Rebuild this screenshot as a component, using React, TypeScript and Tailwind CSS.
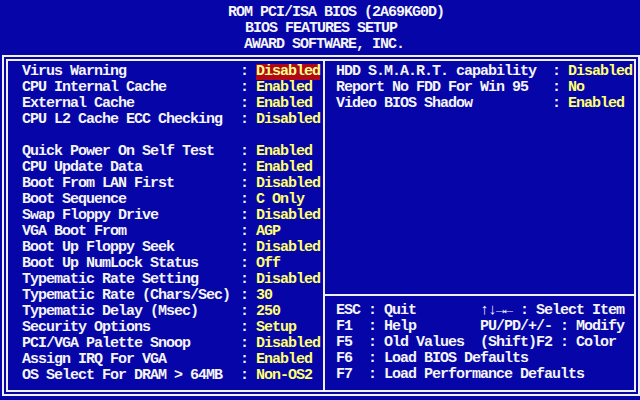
import React from "react"

const left: ([string, string] | null)[] = [
  ["Virus Warning", "Disabled"],
  ["CPU Internal Cache", "Enabled"],
  ["External Cache", "Enabled"],
  ["CPU L2 Cache ECC Checking", "Disabled"],
  null,
  ["Quick Power On Self Test", "Enabled"],
  ["CPU Update Data", "Enabled"],
  ["Boot From LAN First", "Disabled"],
  ["Boot Sequence", "C Only"],
  ["Swap Floppy Drive", "Disabled"],
  ["VGA Boot From", "AGP"],
  ["Boot Up Floppy Seek", "Disabled"],
  ["Boot Up NumLock Status", "Off"],
  ["Typematic Rate Setting", "Disabled"],
  ["Typematic Rate (Chars/Sec)", "30"],
  ["Typematic Delay (Msec)", "250"],
  ["Security Options", "Setup"],
  ["PCI/VGA Palette Snoop", "Disabled"],
  ["Assign IRQ For VGA", "Enabled"],
  ["OS Select For DRAM > 64MB", "Non-OS2"],
]

const right: [string, string][] = [
  ["HDD S.M.A.R.T. capability", "Disabled"],
  ["Report No FDD For Win 95", "No"],
  ["Video BIOS Shadow", "Enabled"],
]

const keys: [string, string, string, string][] = [
  ["ESC", "Quit", "↑↓→←", "Select Item"],
  ["F1", "Help", "PU/PD/+/-", "Modify"],
  ["F5", "Old Values", "(Shift)F2", "Color"],
  ["F6", "Load BIOS Defaults", "", ""],
  ["F7", "Load Performance Defaults", "", ""],
]

function Item({ label, value, labelW, selected }: { label: string; value: string; labelW: string; selected?: boolean }) {
  return (
    <div className="flex h-[16px] leading-[16px] whitespace-pre">
      <span className={`${labelW} shrink-0 text-[#f4f4f4]`}>{label}</span>
      <span className="text-[#f4f4f4]">: </span>
      <span className={selected ? "bg-[#b00818] text-[#ffff88]" : "text-[#ffff70]"}>{value}</span>
    </div>
  )
}

export default function App() {
  return (
    <div className="w-[640px] h-[400px] overflow-hidden bg-[#0606a8] font-['Liberation_Mono',monospace] text-[15px] font-bold tracking-[-1px] text-[#f4f4f4]">
      {/* title lines */}
      <div className="pt-[5px] whitespace-pre">
        <div className="h-[16px] leading-[16px] pl-[228px]">ROM PCI/ISA BIOS (2A69KG0D)</div>
        <div className="h-[16px] leading-[16px] pl-[245px]">BIOS FEATURES SETUP</div>
        <div className="h-[16px] leading-[16px] pl-[244px]">AWARD SOFTWARE, INC.</div>
      </div>

      {/* double frame */}
      <div className="mt-[2px] ml-[2px] w-[638px] h-[341px] border-2 border-[#f0f0f0] p-[2px]">
        <div className="h-full border-2 border-[#f0f0f0] flex">
          <div className="w-[317px] shrink-0 border-r-2 border-[#f0f0f0] pt-[3px] pl-[14px]">
            {left.map((r, i) =>
              r ? (
                <Item key={i} label={r[0]} value={r[1]} labelW="w-[218px]" selected={i === 0} />
              ) : (
                <div key={i} className="h-[16px]" />
              )
            )}
          </div>

          <div className="flex-1 flex flex-col">
            <div className="h-[235px] shrink-0 border-b-2 border-[#f0f0f0] pt-[3px] pl-[11px]">
              {right.map((r) => (
                <Item key={r[0]} label={r[0]} value={r[1]} labelW="w-[216px]" />
              ))}
            </div>
            <div className="pt-[7px] pl-[11px]">
              {keys.map(([k, d, k2, d2]) => (
                <div key={k} className="flex h-[16px] leading-[16px] whitespace-pre">
                  <span className="w-[32px] shrink-0">{k}</span>
                  <span className="w-[112px] shrink-0">: {d}</span>
                  {k2 && (
                    <>
                      <span className={k2.length === 4 ? "w-[40px] shrink-0" : "w-[80px] shrink-0"}>{k2}</span>
                      <span>: {d2}</span>
                    </>
                  )}
                </div>
              ))}
            </div>
          </div>
        </div>
      </div>
    </div>
  )
}
